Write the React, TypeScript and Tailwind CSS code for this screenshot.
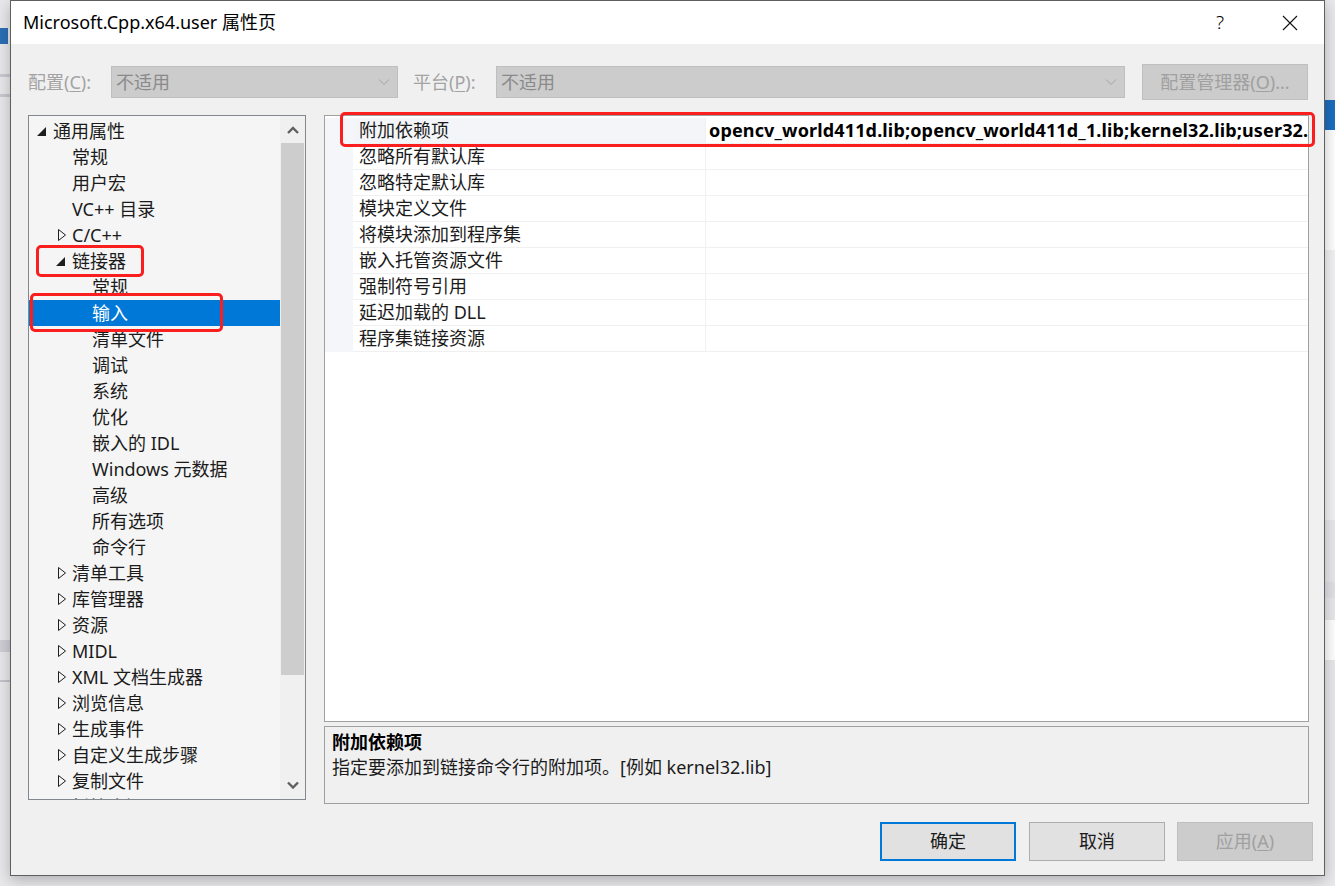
import React from 'react';

type TreeNode = {
  label: string;
  level: 0 | 1 | 2;
  arrow?: 'open' | 'closed';
  selected?: boolean;
};

const treeItems: TreeNode[] = [
  { label: '通用属性', level: 0, arrow: 'open' },
  { label: '常规', level: 1 },
  { label: '用户宏', level: 1 },
  { label: 'VC++ 目录', level: 1 },
  { label: 'C/C++', level: 1, arrow: 'closed' },
  { label: '链接器', level: 1, arrow: 'open' },
  { label: '常规', level: 2 },
  { label: '输入', level: 2, selected: true },
  { label: '清单文件', level: 2 },
  { label: '调试', level: 2 },
  { label: '系统', level: 2 },
  { label: '优化', level: 2 },
  { label: '嵌入的 IDL', level: 2 },
  { label: 'Windows 元数据', level: 2 },
  { label: '高级', level: 2 },
  { label: '所有选项', level: 2 },
  { label: '命令行', level: 2 },
  { label: '清单工具', level: 1, arrow: 'closed' },
  { label: '库管理器', level: 1, arrow: 'closed' },
  { label: '资源', level: 1, arrow: 'closed' },
  { label: 'MIDL', level: 1, arrow: 'closed' },
  { label: 'XML 文档生成器', level: 1, arrow: 'closed' },
  { label: '浏览信息', level: 1, arrow: 'closed' },
  { label: '生成事件', level: 1, arrow: 'closed' },
  { label: '自定义生成步骤', level: 1, arrow: 'closed' },
  { label: '复制文件', level: 1, arrow: 'closed' },
  { label: '托管资源', level: 1, arrow: 'closed' },
];

const indent: Record<number, string> = {
  0: 'pl-[8px]',
  1: 'pl-[27px]',
  2: 'pl-[47px]',
};

const properties = [
  {
    name: '附加依赖项',
    value:
      'opencv_world411d.lib;opencv_world411d_1.lib;kernel32.lib;user32.lib;gdi32.lib;winspool.lib;comdlg32.lib;advapi32.lib;shell32.lib;ole32.lib;oleaut32.lib;uuid.lib;odbc32.lib;odbccp32.lib;%(AdditionalDependencies)',
  },
  { name: '忽略所有默认库', value: '' },
  { name: '忽略特定默认库', value: '' },
  { name: '模块定义文件', value: '' },
  { name: '将模块添加到程序集', value: '' },
  { name: '嵌入托管资源文件', value: '' },
  { name: '强制符号引用', value: '' },
  { name: '延迟加载的 DLL', value: '' },
  { name: '程序集链接资源', value: '' },
];

const TreeArrow: React.FC<{ kind?: 'open' | 'closed' }> = ({ kind }) => {
  if (kind === 'open') {
    return (
      <svg width="10" height="9" viewBox="0 0 10 9" className="block">
        <polygon points="9,0 9,9 0,9" fill="#1e1e1e" />
      </svg>
    );
  }
  if (kind === 'closed') {
    return (
      <svg width="10" height="12" viewBox="0 0 10 12" className="ml-[2px] block">
        <polygon points="0.5,0.5 7.5,6 0.5,11.5" fill="none" stroke="#1e1e1e" strokeWidth="1" />
      </svg>
    );
  }
  return null;
};

const Chevron: React.FC<{ up?: boolean; color: string; stroke?: number }> = ({ up, color, stroke = 1 }) => (
  <svg width="12" height="8" viewBox="0 0 12 8" className="block">
    <polyline points={up ? '1,7 6,2 11,7' : '1,1.5 6,6.5 11,1.5'} fill="none" stroke={color} strokeWidth={stroke} />
  </svg>
);

const App: React.FC = () => {
  return (
    <div className="relative w-[1335px] h-[886px] overflow-hidden bg-[#e9e9ec] text-[18px] text-[#1b1b1b] font-['Segoe_UI','Noto_Sans','Noto_Sans_CJK_SC',sans-serif]">
      {/* window behind the dialog */}
      <div className="absolute left-0 top-[28px] w-[8px] h-[16px] bg-[#2b6fb5]" />
      <div className="absolute left-0 top-[74px] w-[10px] h-[3px] bg-[#c9c9d2]" />
      <div className="absolute left-0 top-[94px] w-[10px] h-[3px] bg-[#c9c9d2]" />
      <div className="absolute left-0 top-[640px] w-[10px] h-[12px] bg-[#cfcfd6]" />
      <div className="absolute left-0 top-[680px] w-[10px] h-[2px] bg-[#c4c4cc]" />
      <div className="absolute right-0 top-[100px] w-[10px] h-[30px] bg-[#1c6fbf]" />
      <div className="absolute right-0 top-[130px] w-[10px] h-[120px] bg-white" />
      <div className="absolute right-0 top-[250px] w-[10px] h-[270px] bg-[#f3f3f5]" />
      <div className="absolute right-0 top-[582px] w-[10px] h-[16px] bg-[#e2e2e6]" />
      <div className="absolute right-0 top-[620px] w-[10px] h-[40px] bg-white" />

      {/* dialog */}
      <div className="absolute left-[10px] top-0 w-[1315px] h-[876px] flex flex-col border border-[#5f5f5f] bg-[#f0f0f0] shadow-[0_4px_14px_rgba(0,0,0,0.25)]">
        <div className="h-[43px] shrink-0 bg-white flex items-center pl-[12px]">
          <span className="text-black">Microsoft.Cpp.x64.user 属性页</span>
          <span className="ml-auto mr-[58px] text-[19px] text-black font-light">?</span>
          <svg width="16" height="16" viewBox="0 0 16 16" className="mr-[26px]">
            <path d="M1 1 L15 15 M15 1 L1 15" stroke="#111" strokeWidth="1.1" />
          </svg>
        </div>

        <div className="flex-1 flex flex-col pl-[17px] pr-[15px]">
          {/* configuration row */}
          <div className="mt-[20px] h-[36px] flex items-center text-[#a3a3a3]">
            <span className="w-[83px]">
              配置(<span className="underline underline-offset-2">C</span>):
            </span>
            <div className="w-[287px] h-[32px] flex items-center justify-between pl-[4px] pr-[7px] bg-[#cccccc] border border-[#bfbfbf] text-[#8a8a8a]">
              <span>不适用</span>
              <Chevron color="#a4a4a4" />
            </div>
            <span className="ml-[15px] w-[83px]">
              平台(<span className="underline underline-offset-2">P</span>):
            </span>
            <div className="w-[629px] h-[32px] flex items-center justify-between pl-[4px] pr-[7px] bg-[#cccccc] border border-[#bfbfbf] text-[#8a8a8a]">
              <span>不适用</span>
              <Chevron color="#a4a4a4" />
            </div>
            <div className="ml-[17px] w-[166px] h-[36px] flex items-center justify-center bg-[#cccccc] border border-[#bfbfbf] text-[#a0a0a0]">
              配置管理器(<span className="underline underline-offset-2">O</span>)...
            </div>
          </div>

          {/* main area */}
          <div className="mt-[15px] flex gap-[18px]">
            {/* tree */}
            <div className="w-[278px] h-[685px] flex border border-[#828790] bg-[#f5f5f5]">
              <div className="flex-1 overflow-hidden pt-[2px]">
                {treeItems.map((item, i) => (
                  <div
                    key={i}
                    className={`h-[26px] flex items-center whitespace-nowrap ${indent[item.level]} ${
                      item.selected ? 'bg-[#0078d7] text-white' : ''
                    }`}
                  >
                    <span className="w-[16px] h-[26px] flex items-center">
                      <TreeArrow kind={item.arrow} />
                    </span>
                    <span>{item.label}</span>
                  </div>
                ))}
              </div>
              <div className="w-[25px] flex flex-col bg-[#f0f0f0]">
                <div className="h-[27px] flex items-center justify-center">
                  <Chevron up color="#606060" stroke={2.4} />
                </div>
                <div className="mx-[1px] h-[532px] bg-[#cdcdcd]" />
                <div className="flex-1" />
                <div className="h-[28px] flex items-center justify-center">
                  <Chevron color="#606060" stroke={2.4} />
                </div>
              </div>
            </div>

            {/* property grid + description */}
            <div className="w-[985px] flex flex-col">
              <div className="h-[607px] border border-[#a0a0a0] bg-white pt-[2px]">
                {properties.map((p, i) => (
                  <div key={i} className="h-[26px] flex">
                    <div className="w-[28px] shrink-0 bg-[#f5f6f9]" />
                    <div
                      className={`w-[353px] shrink-0 pl-[6px] flex items-center border-b border-r border-[#f0f0f0] ${
                        i === 0 ? 'bg-[#f3f5f8]' : 'bg-white'
                      }`}
                    >
                      {p.name}
                    </div>
                    <div className="flex-1 min-w-0 overflow-hidden whitespace-nowrap pl-[3px] flex items-center border-b border-[#f0f0f0] font-bold text-black tracking-[0.15px]">
                      {p.value}
                    </div>
                  </div>
                ))}
              </div>
              <div className="mt-[4px] h-[78px] border border-[#a0a0a0] bg-[#f0f0f0] px-[7px] pt-[3px] leading-[25px]">
                <div className="font-bold text-black">附加依赖项</div>
                <div>指定要添加到链接命令行的附加项。[例如 kernel32.lib]</div>
              </div>
            </div>
          </div>

          {/* buttons */}
          <div className="mt-[18px] -mr-[4px] flex justify-end">
            <div className="w-[136px] h-[39px] flex items-center justify-center bg-[#e1e1e1] border-2 border-[#0078d7]">
              确定
            </div>
            <div className="ml-[13px] w-[136px] h-[39px] flex items-center justify-center bg-[#e1e1e1] border border-[#adadad]">
              取消
            </div>
            <div className="ml-[12px] w-[136px] h-[39px] flex items-center justify-center bg-[#cccccc] border border-[#bfbfbf] text-[#a0a0a0]">
              应用(<span className="underline underline-offset-2">A</span>)
            </div>
          </div>
        </div>
      </div>

      {/* annotation boxes */}
      <div className="absolute left-[340px] top-[112px] w-[975px] h-[35px] border-[3px] border-[#fa1e1e] rounded-[5px]" />
      <div className="absolute left-[36px] top-[245px] w-[108px] h-[32px] border-[3px] border-[#fa1e1e] rounded-[5px]" />
      <div className="absolute left-[30px] top-[293px] w-[193px] h-[39px] border-[3px] border-[#fa1e1e] rounded-[5px]" />
    </div>
  );
};

export default App;
